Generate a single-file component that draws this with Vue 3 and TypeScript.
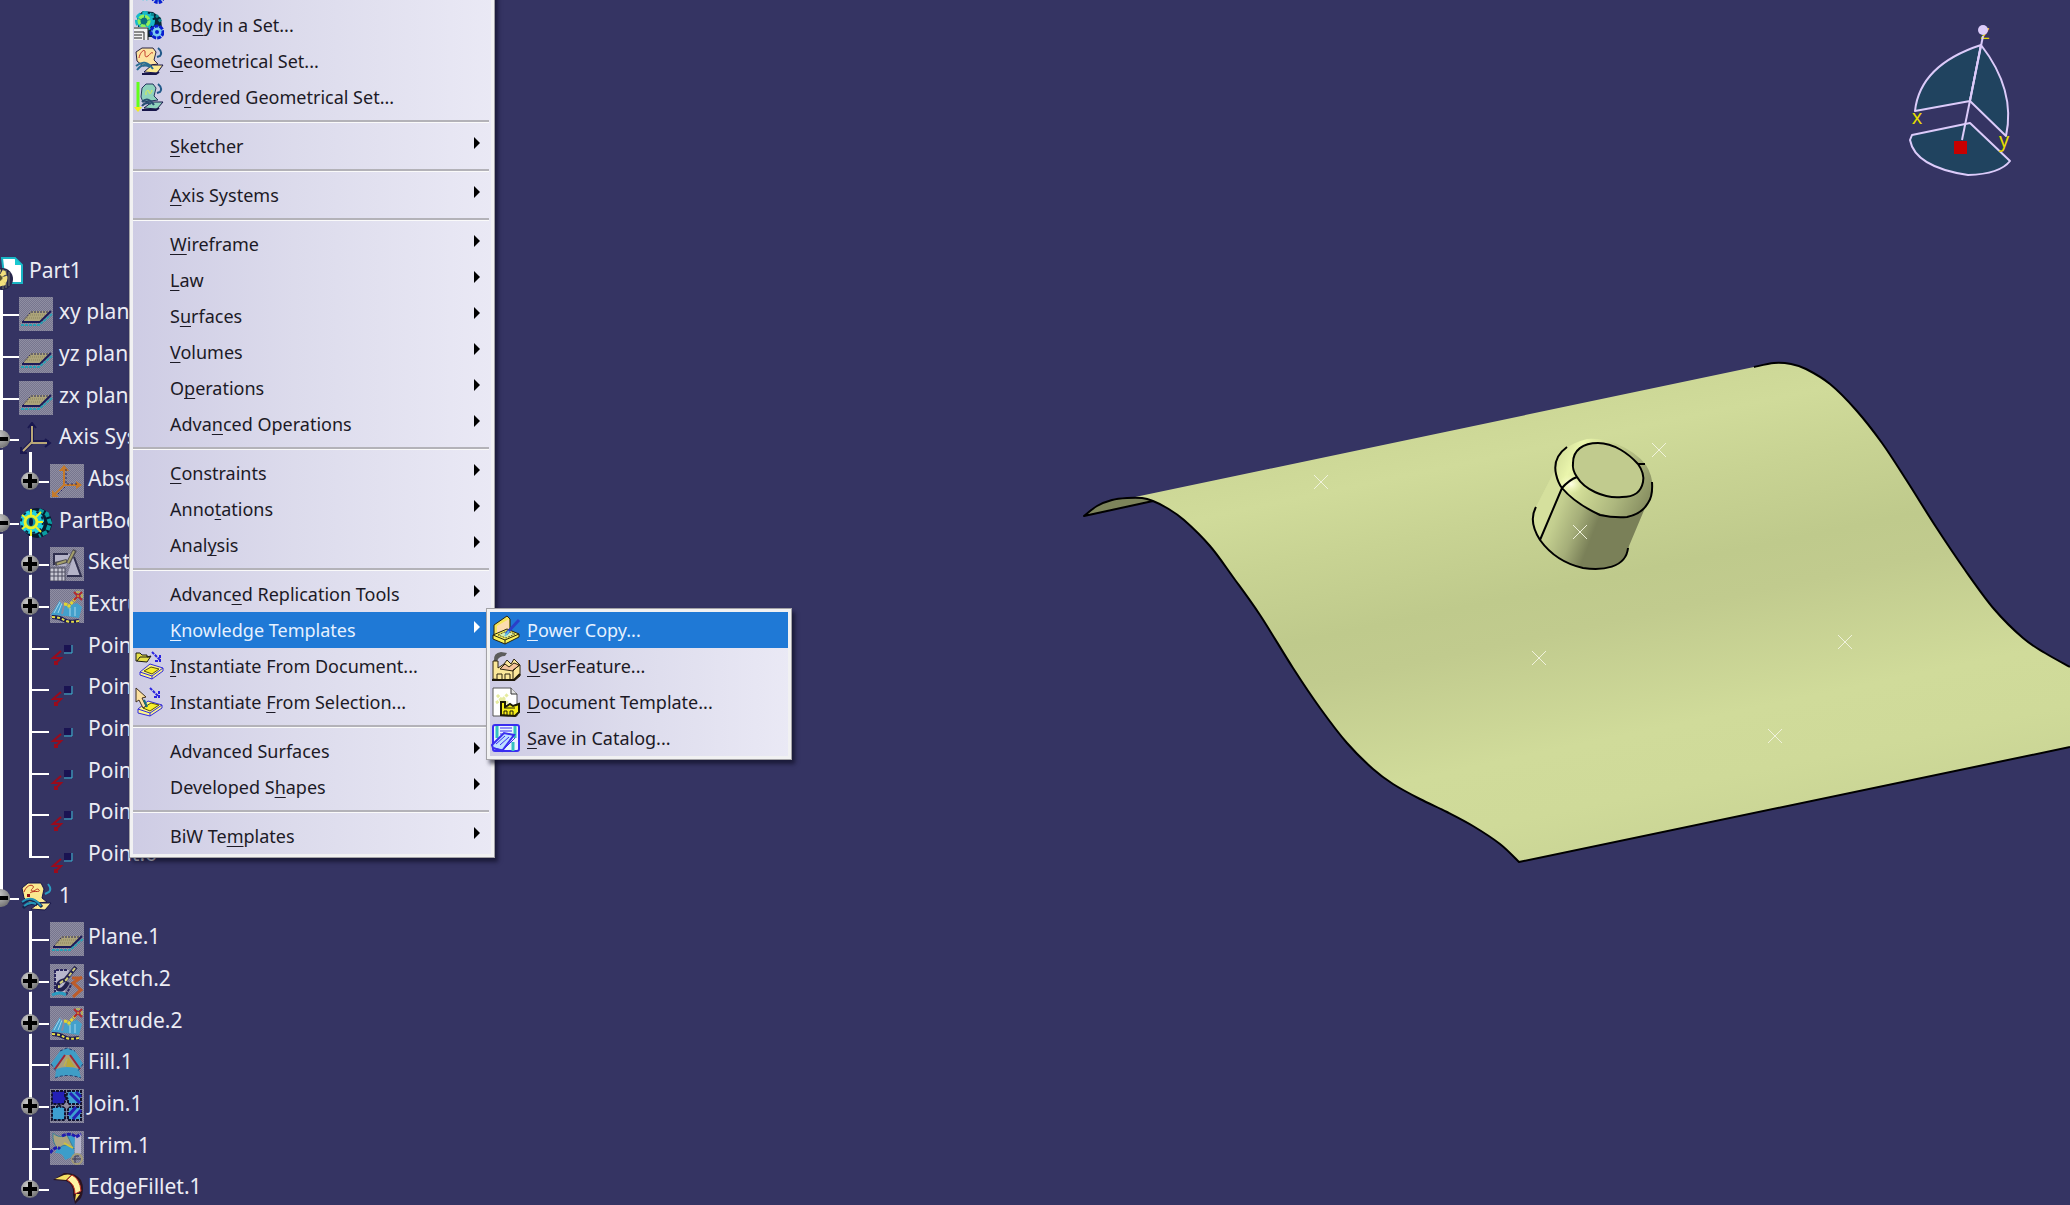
<script setup lang="ts">
interface TreeNode {
  label: string
  icon: string
  level: 0 | 1 | 2
  knob?: 'plus' | 'minus'
  first?: boolean
  last?: boolean
  trunk?: 'full' | 'start' | 'end'
}

interface MenuItem {
  label: string
  icon?: string
  sub?: boolean
  children?: MenuItem[]
}

type Point = [number, number]

const tree: TreeNode[] = [
  { label: 'Part1', icon: 'part', level: 0, trunk: 'start' },
  { label: 'xy plane', icon: 'plane', level: 1, trunk: 'full' },
  { label: 'yz plane', icon: 'plane', level: 1, trunk: 'full' },
  { label: 'zx plane', icon: 'plane', level: 1, trunk: 'full' },
  { label: 'Axis Systems', icon: 'axes', level: 1, knob: 'minus', trunk: 'full' },
  { label: 'Absolute', icon: 'axis', level: 2, knob: 'plus', first: true, last: true, trunk: 'full' },
  { label: 'PartBody', icon: 'gear', level: 1, knob: 'minus', trunk: 'full' },
  { label: 'Sketch.1', icon: 'sketch', level: 2, knob: 'plus', first: true, trunk: 'full' },
  { label: 'Extrude.1', icon: 'extrude', level: 2, knob: 'plus', trunk: 'full' },
  { label: 'Point.1', icon: 'point', level: 2, trunk: 'full' },
  { label: 'Point.2', icon: 'point', level: 2, trunk: 'full' },
  { label: 'Point.3', icon: 'point', level: 2, trunk: 'full' },
  { label: 'Point.4', icon: 'point', level: 2, trunk: 'full' },
  { label: 'Point.5', icon: 'point', level: 2, trunk: 'full' },
  { label: 'Point.6', icon: 'point', level: 2, last: true, trunk: 'full' },
  { label: '1', icon: 'geoset', level: 1, knob: 'minus', trunk: 'end' },
  { label: 'Plane.1', icon: 'plane', level: 2, first: true },
  { label: 'Sketch.2', icon: 'sketch2', level: 2, knob: 'plus' },
  { label: 'Extrude.2', icon: 'extrude', level: 2, knob: 'plus' },
  { label: 'Fill.1', icon: 'fill', level: 2 },
  { label: 'Join.1', icon: 'join', level: 2, knob: 'plus' },
  { label: 'Trim.1', icon: 'trim', level: 2 },
  { label: 'EdgeFillet.1', icon: 'fillet', level: 2, knob: 'plus', last: true },
]

// An ampersand marks the accelerator letter of each entry.
const groups: MenuItem[][] = [
  [
    { label: '&Body...', icon: 'body' },
    { label: 'Bo&dy in a Set...', icon: 'bodyset' },
    { label: '&Geometrical Set...', icon: 'mgeoset' },
    { label: 'O&rdered Geometrical Set...', icon: 'ordered' },
  ],
  [{ label: '&Sketcher', sub: true }],
  [{ label: '&Axis Systems', sub: true }],
  [
    { label: '&Wireframe', sub: true },
    { label: '&Law', sub: true },
    { label: 'S&urfaces', sub: true },
    { label: '&Volumes', sub: true },
    { label: 'O&perations', sub: true },
    { label: 'Adva&nced Operations', sub: true },
  ],
  [
    { label: '&Constraints', sub: true },
    { label: 'Anno&tations', sub: true },
    { label: 'Anal&ysis', sub: true },
  ],
  [
    { label: 'Advanc&ed Replication Tools', sub: true },
    {
      label: '&Knowledge Templates',
      sub: true,
      children: [
        { label: '&Power Copy...', icon: 'power' },
        { label: '&UserFeature...', icon: 'factory' },
        { label: '&Document Template...', icon: 'doctemplate' },
        { label: '&Save in Catalog...', icon: 'catalog' },
      ],
    },
    { label: '&Instantiate From Document...', icon: 'fromdoc' },
    { label: 'Instantiate &From Selection...', icon: 'fromsel' },
  ],
  [
    { label: 'Advanced Surfaces', sub: true },
    { label: 'Developed S&hapes', sub: true },
  ],
  [{ label: 'BiW Te&mplates', sub: true }],
]

function parts(label: string): [string, string, string] {
  const i = label.indexOf('&')
  return i < 0 ? [label, '', ''] : [label.slice(0, i), label[i + 1], label.slice(i + 2)]
}

// Catmull-Rom spline through the given points, as cubic path segments.
function spline(pts: Point[]): string {
  let d = ''
  for (let i = 0; i < pts.length - 1; i++) {
    const a = pts[Math.max(i - 1, 0)]
    const b = pts[i]
    const c = pts[i + 1]
    const e = pts[Math.min(i + 2, pts.length - 1)]
    d += `C${b[0] + (c[0] - a[0]) / 6} ${b[1] + (c[1] - a[1]) / 6} ${c[0] - (e[0] - b[0]) / 6} ${c[1] - (e[1] - b[1]) / 6} ${c[0]} ${c[1]}`
  }
  return d
}

const farCurve: Point[] = [
  [1754, 367], [1774, 363], [1791, 364], [1806, 369], [1830, 384], [1856, 410], [1882, 443], [1907, 481],
  [1936, 527], [1965, 570], [1994, 609], [2023, 638], [2045, 653], [2070, 667],
]
const nearCurve: Point[] = [
  [1084, 516], [1097, 506], [1112, 500], [1127, 498], [1142, 498], [1153, 501], [1167, 508], [1184, 520], [1210, 546],
  [1233, 577], [1260, 615], [1293, 668], [1320, 708], [1347, 743], [1373, 769], [1393, 784], [1420, 799],
  [1447, 812], [1473, 826], [1500, 844], [1519, 862],
]
const sheetFill = `M1135 497L1754 367${spline(farCurve)}V747L1519 862${spline(nearCurve.slice(5).reverse())}Z`
const sheetEdge = `M1153 501L1084 516${spline(nearCurve)}L2070 747M1754 367${spline(farCurve)}`
const underside = `M1084 516${spline(nearCurve.slice(0, 6))}Z`

const points: Point[] = [
  [1321, 482], [1659, 450], [1580, 532], [1539, 658], [1845, 642], [1775, 736],
]
</script>

<template>
  <div class="app">
    <svg width="0" height="0" class="sheet" aria-hidden="true">
      <defs>
        <pattern id="dither" width="2" height="2" patternUnits="userSpaceOnUse">
          <rect width="2" height="2" fill="#77768f" />
          <path d="M0 0h1v1h-1zM1 1h1v1h-1z" fill="#8f8ea2" />
        </pattern>
        <symbol id="i-part" viewBox="0 0 34 34">
          <path d="M11 2h13l7 7v18H14z" fill="#fff" stroke="#19b4c4" stroke-width="2" />
          <path d="M24 2v7h7z" fill="#19c8d0" />
          <circle cx="11" cy="23" r="11" fill="#26264a" />
          <path d="M12 13v20M15 14v18M18 16v14" stroke="#77766a" stroke-width="1" />
          <circle cx="8" cy="22" r="6" fill="none" stroke="#f3e07c" stroke-width="5" stroke-dasharray="4 1" />
          <path d="M2 29l12-14M2 15l12 14" stroke="#f3e07c" stroke-width="3" />
          <circle cx="8" cy="22" r="3" fill="#57522f" />
        </symbol>
        <symbol id="i-plane" viewBox="0 0 34 34">
          <rect width="34" height="34" fill="url(#dither)" />
          <path d="M2 26L12 14H32L21 26Z" fill="#aca47a" />
          <path d="M12 15H31M4 24L12 15" stroke="#25235a" stroke-width="1" stroke-dasharray="2 1" fill="none" />
          <path d="M9 18h18M6 21h18" stroke="#8a835f" stroke-width="1" stroke-dasharray="1 1" fill="none" />
          <path d="M3 25H21L32 14" stroke="#1d1a58" stroke-width="2" fill="none" />
          <path d="M2 28H20L33 17" stroke="#2aa0b4" stroke-width="2" fill="none" stroke-dasharray="3 1" />
        </symbol>
        <symbol id="i-axes" viewBox="0 0 34 34">
          <path d="M13 2v18h17M13 20L3 30" stroke="#1a1850" stroke-width="4" fill="none" />
          <path d="M13 4v17h15M13 20L4 29" stroke="#b9a777" stroke-width="2" fill="none" />
          <path d="M9 6l4-5 4 5M26 17l5 4-5 4M2 25v6h6" stroke="#1a1850" stroke-width="2" fill="none" />
        </symbol>
        <symbol id="i-axis" viewBox="0 0 34 34">
          <rect width="34" height="34" fill="url(#dither)" />
          <path d="M14 3v18h17M14 21L3 32" stroke="#c57a2a" stroke-width="2" fill="none" />
          <path d="M14 1l5 6H9zM32 21l-6-4v8zM2 33v-7l7 7z" fill="#c57a2a" />
          <path d="M16 5v15h12M15 23l-8 8" stroke="#29265e" stroke-width="1" stroke-dasharray="2 2" fill="none" />
        </symbol>
        <symbol id="i-gear" viewBox="0 0 34 34">
          <circle cx="18" cy="17" r="15" fill="#071b30" />
          <path d="M20 4l8 4 3 9-3 9-8 4" fill="none" stroke="#0a9ca1" stroke-width="4" stroke-dasharray="5 2" />
          <circle cx="13" cy="16" r="12" fill="#22cfe0" />
          <circle cx="13" cy="16" r="11" fill="none" stroke="#0b2a48" stroke-width="2" stroke-dasharray="3 4" />
          <circle cx="12" cy="16" r="6" fill="#1596a8" stroke="#e9f22a" stroke-width="3" />
          <path d="M3 9l5 4M12 3v6M22 6l-5 5M3 23l5-4M12 30v-6M22 26l-5-5M18 16h6" stroke="#e9f22a" stroke-width="2" />
          <ellipse cx="12" cy="16" rx="2" ry="4" fill="#0b1a3f" />
        </symbol>
        <symbol id="i-sketch" viewBox="0 0 34 34">
          <rect width="34" height="34" fill="url(#dither)" />
          <path d="M4 7h17l-5 12H4zM23 10l7 19H17z" fill="#b4b3c8" />
          <path d="M4 18V7h14M17 29h14L24 10" stroke="#30304f" stroke-width="2" fill="none" />
          <path d="M25 3l-7 13M5 17l12-3" stroke="#4c4a50" stroke-width="4" />
          <path d="M24 4l-6 12M7 17l9-3" stroke="#a49f6a" stroke-width="2" />
          <path d="M0 21h15v13H0zM4 21v13M8 21v13M12 21v13M0 25h15M0 29h15" stroke="#4a4a5f" stroke-width="1" fill="#c8c8d4" />
        </symbol>
        <symbol id="i-sketch2" viewBox="0 0 34 34">
          <rect width="34" height="34" fill="url(#dither)" />
          <path d="M5 6h14l-4 22H5z" fill="#b7b6cc" />
          <path d="M5 29V6h13M16 31l6-12" stroke="#29265e" stroke-width="2" fill="none" stroke-dasharray="3 1" />
          <path d="M26 3L15 16Q6 18 8 25Q13 28 18 18" stroke="#23214f" stroke-width="4" fill="none" />
          <path d="M25 4L16 16Q8 18 9 24" stroke="#d3cf78" stroke-width="2" fill="none" stroke-dasharray="4 2" />
          <path d="M2 31q8-4 14 0" stroke="#2a9cc0" stroke-width="3" fill="none" />
          <path d="M32 13l-9 6 8 7-8 7M22 14h10" stroke="#bd5c2a" stroke-width="3" fill="none" />
        </symbol>
        <symbol id="i-extrude" viewBox="0 0 34 34">
          <rect width="34" height="34" fill="url(#dither)" />
          <path d="M1 26L10 11L17 17L27 14L32 18L29 29L16 27Z" fill="#43a0cc" />
          <path d="M4 24L10 13M8 24l4-10M20 19v8M25 18v9" stroke="#a6d6ec" stroke-width="1" fill="none" />
          <path d="M10 11l4 5-2 9" stroke="#8b8aa0" stroke-width="2" fill="none" />
          <path d="M2 28q7 0 12 3t15 1" stroke="#1b1a50" stroke-width="4" fill="none" />
          <path d="M2 28q7 0 12 3t15 1" stroke="#e6df48" stroke-width="2" stroke-dasharray="3 2" fill="none" />
          <path d="M14 15q6 0 5 5M18 18l8-9" stroke="#e0d531" stroke-width="3" fill="none" stroke-dasharray="3 1" />
          <path d="M24 3l8 8M32 3l-8 8" fill="none" stroke="#b3282c" stroke-width="2" />
          <path d="M26 3h4M27 7h2M32 5v4" stroke="#e0d531" stroke-width="1" />
        </symbol>
        <symbol id="i-point" viewBox="0 0 34 34">
          <path d="M14 14h7v7h-7z" fill="#1a1352" />
          <path d="M22 14v8h-8" stroke="#3ab5d3" stroke-width="1" fill="none" />
          <path d="M11 20L3 27H11L5 33M5 30v3h3" stroke="#9a0b1c" stroke-width="2" fill="none" />
        </symbol>
        <symbol id="i-fill" viewBox="0 0 34 34">
          <rect width="34" height="34" fill="url(#dither)" />
          <path d="M1 17L10 4L17 1L25 4L33 17L29 23L31 31Q17 26 5 31L6 23Z" fill="#3f9dc6" />
          <path d="M10 4L17 1L25 4M1 17l5 7M33 17l-5 7M5 31Q17 26 31 31" stroke="#233a6c" stroke-width="1" fill="none" stroke-dasharray="3 2" />
          <path d="M6 22L15 8h5l9 14Q17 18 6 22Z" fill="#a89f7d" />
          <path d="M5 22L15 8M20 8l10 14" stroke="#9c2638" stroke-width="2" />
          <path d="M18 10l7 10h-9z" fill="#b8a83a" />
          <path d="M14 19l3-7" stroke="#c9bc3a" stroke-width="1" />
        </symbol>
        <symbol id="i-join" viewBox="0 0 34 34">
          <rect width="34" height="34" fill="url(#dither)" />
          <path d="M2 2h13v5l2 2-2 3v3H2z" fill="#2420b5" stroke="#12122e" stroke-width="2" stroke-dasharray="3 1" />
          <path d="M18 2h13v13H18v-5l-2-2zM2 18h5l2-2 2 2h4v13H2zM18 18h13v13H18z" fill="#3d9fd0" stroke="#12122e" stroke-width="2" stroke-dasharray="3 1" />
          <path d="M20 4l10 10M26 3l5 5M19 26l7-8M23 30l8-9" stroke="#2420b5" stroke-width="3" />
          <path d="M16 13l4 4-3 3-4-3z" fill="#8d8c9d" />
        </symbol>
        <symbol id="i-trim" viewBox="0 0 34 34">
          <rect width="34" height="34" fill="url(#dither)" />
          <path d="M24 6l7-4v20l-6 3z" fill="#b5b4ca" />
          <path d="M12 7q8-6 13 0l-1 18-9 4q-2-8-10-7z" fill="#3c9dca" />
          <path d="M3 2q6 6 14 2l7 14q-8-8-16 0Q2 12 3 2Z" fill="#aba47f" stroke="#3b7f96" stroke-width="1" />
          <path d="M0 22q6-8 10-4M12 5q8-4 14 1l5-3" stroke="#211cae" stroke-width="3" fill="none" stroke-dasharray="4 1" />
          <path d="M14 12l9 5" stroke="#cfc23c" stroke-width="2" />
          <circle cx="27" cy="28" r="5" fill="none" stroke="#a39b76" stroke-width="2" />
          <path d="M22 28h9M25 32v-7h4" stroke="#3a3850" stroke-width="1" fill="none" />
        </symbol>
        <symbol id="i-fillet" viewBox="0 0 34 34">
          <path d="M3 8L14 1Q25 0 31 8Q35 17 31 26L25 32L23 23Q24 12 16 9Z" fill="#2a1420" />
          <path d="M5 7L14 3Q18 2 21 3L16 8Z" fill="#f5df63" />
          <path d="M17 8L22 3Q30 7 31 19L25 22Q25 12 17 8Z" fill="#fdf3a4" stroke="#c02a20" stroke-width="1" />
          <path d="M26 22h4l-5 7z" fill="#f5df63" />
        </symbol>
        <symbol id="i-geoset" viewBox="0 0 34 34">
          <path d="M3 7L9 2H22L25 8L23 17L28 21L11 23L5 17Z" fill="#fbe98f" stroke="#18164a" stroke-width="1" />
          <path d="M5 11C7 5 12 3 14 5S10 9 13 10S18 6 20 9S14 9 11 12" fill="none" stroke="#b8331f" stroke-width="1" />
          <path d="M8 13h3v3h-3z" fill="#8f0f12" />
          <path d="M29 3q4 5 1 8l-4 2" fill="none" stroke="#2b9bc1" stroke-width="2" />
          <path d="M12 28L20 22H32L26 29Z" fill="#fbe98f" stroke="#18164a" stroke-width="1" />
          <path d="M3 22q10-8 20 4M4 27q7-7 14-3" fill="none" stroke="#15234e" stroke-width="3" />
          <path d="M3 21q10-8 19 4M5 25q6-5 12-2" fill="none" stroke="#2495b8" stroke-width="2" />
        </symbol>

        <symbol id="i-body" viewBox="0 0 30 30">
          <circle cx="14" cy="14" r="12" fill="#071b30" />
          <circle cx="11" cy="17" r="7" fill="#0c97a8" stroke="#22cfe0" stroke-width="5" stroke-dasharray="4 2" />
          <circle cx="11" cy="17" r="5" fill="none" stroke="#a8f04a" stroke-width="2" stroke-dasharray="4 2" />
          <circle cx="24" cy="23" r="5" fill="#6ec9ee" stroke="#0a1fd0" stroke-width="4" stroke-dasharray="3 1" />
        </symbol>
        <symbol id="i-bodyset" viewBox="0 0 30 30">
          <path d="M3 6l6-5 10 1 8 6 1 10-7 9H5z" fill="#06283a" />
          <circle cx="11" cy="11" r="8" fill="#18b9c9" stroke="#18b9c9" stroke-width="4" stroke-dasharray="5 2" />
          <circle cx="10" cy="11" r="5" fill="#0b6f80" stroke="#8ff05a" stroke-width="3" stroke-dasharray="5 1" />
          <path d="M17 4l6 2 4 6" stroke="#0b8791" stroke-width="3" fill="none" stroke-dasharray="3 2" />
          <circle cx="23" cy="22" r="6" fill="#7ccdf0" stroke="#0a1fd0" stroke-width="3" stroke-dasharray="4 1" />
          <circle cx="23" cy="22" r="2" fill="#0a1fd0" />
          <path d="M0 17h14v13H0z" fill="#f2f2f2" />
          <path d="M0 18h14v12M0 22h10v8M0 25h8M0 28h8" stroke="#222" stroke-width="1" fill="none" />
        </symbol>
        <symbol id="i-mgeoset" viewBox="0 0 30 30">
          <path d="M2 6L8 2H19L22 6L20 14L24 18L9 20L3 15Z" fill="#fde2a0" stroke="#2a2340" stroke-width="1" />
          <path d="M5 12C6 6 11 2 11 6S11 12 14 10S16 6 19 7" fill="none" stroke="#c0352a" stroke-width="1" />
          <path d="M24 2q5 4 2 8l-3 1" fill="none" stroke="#235a8a" stroke-width="2" />
          <path d="M10 26L18 19H29L23 27Z" fill="#fbe98f" stroke="#18164a" stroke-width="1" />
          <path d="M8 28h14l3-2" stroke="#18164a" stroke-width="2" fill="none" />
          <path d="M2 20q9-8 17 3M3 24q6-8 13-3" fill="none" stroke="#2a6d92" stroke-width="2" />
        </symbol>
        <symbol id="i-ordered" viewBox="0 0 30 30">
          <path d="M8 6L12 2H19L22 6L20 14L24 18L9 20L7 15Z" fill="#8fd2bd" stroke="#23345e" stroke-width="1" />
          <path d="M12 13C11 8 15 7 15 10S18 11 18 8" fill="none" stroke="#dff04a" stroke-width="1" />
          <path d="M24 2q5 4 2 8l-3 1" fill="none" stroke="#235a8a" stroke-width="2" />
          <path d="M10 26L18 20H29L23 27Z" fill="#8fd2bd" stroke="#18164a" stroke-width="1" />
          <path d="M8 28h14l3-2" stroke="#18164a" stroke-width="2" fill="none" />
          <path d="M8 20q6-6 12 3M8 24q4-5 9-2" fill="none" stroke="#2a4d72" stroke-width="2" />
          <path d="M4 0v26" stroke="#63ff1a" stroke-width="3" />
          <path d="M0 25h8l-4 5z" fill="#f4f01a" />
        </symbol>
        <symbol id="i-fromdoc" viewBox="0 0 30 30">
          <path d="M2 10V2h4l2 2h5v2l4-1-4 6z" fill="#e6e04a" stroke="#1c1c10" stroke-width="1" />
          <path d="M3 10l3-4h10" stroke="#1c1c10" stroke-width="1" fill="none" />
          <path d="M18 1l8 8M26 4v6h-6" fill="none" stroke="#2a22e0" stroke-width="2" stroke-dasharray="3 1" />
          <path d="M6 21L16 13L29 17V20L18 28L6 24Z" fill="#fbf58a" stroke="#3028e0" stroke-width="1" />
          <path d="M6 21l12 4 11-8M18 25v3" fill="none" stroke="#3028e0" stroke-width="1" />
          <path d="M10 20l7-4 8 2-7 5z" fill="#f8ee2a" stroke="#55510f" stroke-width="1" />
        </symbol>
        <symbol id="i-fromsel" viewBox="0 0 30 30">
          <path d="M16 1l8 8M25 4v6h-6" fill="none" stroke="#2a22e0" stroke-width="2" stroke-dasharray="3 1" />
          <path d="M4 22L14 14L28 18V21L16 29L4 26Z" fill="#fbf58a" stroke="#3028e0" stroke-width="1" />
          <path d="M4 22l12 4 12-8M16 26v3" fill="none" stroke="#3028e0" stroke-width="1" />
          <path d="M9 21l8-5 8 2-9 6z" fill="#f8f02a" stroke="#55510f" stroke-width="1" />
          <path d="M2 1v14l3-2 4 8 3-2-4-8 4-1z" fill="#fbe0a0" stroke="#403020" stroke-width="1" />
          <path d="M13 20l-3-7" stroke="#17707c" stroke-width="2" />
        </symbol>
        <symbol id="i-power" viewBox="0 0 30 30">
          <path d="M3 20V10L16 1L19 4V14L6 22Z" fill="#f4e55a" stroke="#28240c" stroke-width="1" />
          <path d="M6 11L18 4V15L6 19Z" fill="#fbdcae" />
          <path d="M2 20L16 14L28 19V22L14 29L2 24Z" fill="#f8f05a" stroke="#28240c" stroke-width="1" />
          <path d="M2 20l12 5 14-6M14 25v4" fill="none" stroke="#28240c" stroke-width="1" />
          <path d="M7 20l9-4 8 3-9 4z" fill="#d6ecb0" stroke="#5c5a20" stroke-width="1" stroke-dasharray="2 1" />
          <path d="M28 5L15 19" stroke="#2b3fc8" stroke-width="3" />
          <path d="M18 16l-4 5" stroke="#5cc0e8" stroke-width="2" />
        </symbol>
        <symbol id="i-factory" viewBox="0 0 30 30">
          <path d="M3 10Q2 2 10 1l6 1-2 3Q8 5 6 10Z" fill="#5c5c5c" />
          <path d="M2 28V10h5v7l6-4 3-4 4 4 3-5 6 6v11l-6 5z" fill="#fbe79a" stroke="#2e2410" stroke-width="1" />
          <path d="M9 18l5-5 4 3 5-4 5 2-6 6z" fill="#f5c49c" stroke="#2e2410" stroke-width="1" />
          <path d="M22 28V19l7-5M6 28v-5h5v5M14 28v-5h5v5" fill="none" stroke="#2e2410" stroke-width="1" />
          <path d="M1 29h22l6-6" fill="none" stroke="#1c160a" stroke-width="2" />
        </symbol>
        <symbol id="i-doctemplate" viewBox="0 0 30 30">
          <path d="M2 1h18l6 6v22H2z" fill="#fff" stroke="#555" stroke-width="1" />
          <path d="M20 1v6h6" fill="#e4e4e4" stroke="#333" stroke-width="1" />
          <path d="M6 8l5 5 6-6M5 16l6-4 6 4" fill="none" stroke="#e6eba0" stroke-width="3" stroke-dasharray="3 1" />
          <path d="M10 28V15h4v5l5-3 3 2 6-2v8l-4 4z" fill="#f6ee1a" stroke="#1e1c06" stroke-width="2" />
          <path d="M13 28v-4h3v4M19 28v-4h3v4M14 21h10" fill="none" stroke="#1e1c06" stroke-width="1" />
        </symbol>
        <symbol id="i-catalog" viewBox="0 0 30 30">
          <rect x="2" y="2" width="26" height="26" rx="2" fill="#eaf4ff" stroke="#3a2ef0" stroke-width="2" />
          <path d="M6 3v12M24 3v12" stroke="#35c2c0" stroke-width="3" />
          <path d="M9 5h12M9 8h12M9 11h9" stroke="#3a2ef0" stroke-width="1" />
          <path d="M1 22L13 10l10 2-9 12-3 4-9-3z" fill="#bfe0ff" stroke="#3a2ef0" stroke-width="2" />
          <path d="M5 21l9-8M9 22l9-8M3 25l9 2 12-12" fill="none" stroke="#3a2ef0" stroke-width="1" />
          <path d="M22 19v9" stroke="#35c2c0" stroke-width="3" />
        </symbol>
      </defs>
    </svg>

    <svg class="scene" viewBox="0 0 2070 1205" preserveAspectRatio="xMaxYMin slice" role="img" aria-label="3D part view">
      <defs>
        <linearGradient id="sheetShade" gradientUnits="userSpaceOnUse" x1="1400" y1="441" x2="1490" y2="871">
          <stop offset="0" stop-color="#cdd897" />
          <stop offset="0.08" stop-color="#d0db9a" />
          <stop offset="0.22" stop-color="#c8d393" />
          <stop offset="0.4" stop-color="#bfca8c" />
          <stop offset="0.5" stop-color="#c1cb8e" />
          <stop offset="0.76" stop-color="#d0db9a" />
          <stop offset="0.9" stop-color="#cfda99" />
          <stop offset="1" stop-color="#cbd696" />
        </linearGradient>
        <linearGradient id="bossShade" gradientUnits="userSpaceOnUse" x1="1540" y1="505" x2="1630" y2="540">
          <stop offset="0" stop-color="#d2dd9b" />
          <stop offset="0.2" stop-color="#c3ce8f" />
          <stop offset="0.42" stop-color="#a5ae79" />
          <stop offset="0.62" stop-color="#7a8058" />
          <stop offset="1" stop-color="#7a8058" />
        </linearGradient>
        <linearGradient id="ringShade" gradientUnits="userSpaceOnUse" x1="1556" y1="460" x2="1648" y2="505">
          <stop offset="0" stop-color="#d6e19c" />
          <stop offset="0.16" stop-color="#eaf5ac" />
          <stop offset="0.4" stop-color="#cbd692" />
          <stop offset="0.7" stop-color="#adb77e" />
          <stop offset="1" stop-color="#868d60" />
        </linearGradient>
        <radialGradient id="glint">
          <stop offset="0" stop-color="#ffffe8" />
          <stop offset="1" stop-color="#f3fbb8" stop-opacity="0" />
        </radialGradient>
      </defs>

      <path :d="sheetFill" fill="url(#sheetShade)" />
      <path :d="underside" fill="#7d845b" />
      <path :d="sheetEdge" class="edge" />

      <path d="M1555 470L1536 507Q1528 521 1540 540Q1556 562 1583 568C1602 571 1626 568 1629 546L1645 508L1600 490Z" fill="url(#bossShade)" />
      <path d="M1555 470L1536 507Q1528 521 1540 540L1562 488Z" fill="#d5e09d" />
      <path d="M1587 439Q1602 438 1617 444Q1636 452 1646 465Q1654 478 1652 492Q1649 511 1627 517Q1612 519 1590 510Q1571 501 1562 488Q1554 478 1555 465Q1559 446 1587 439Z" fill="url(#ringShade)" />
      <ellipse cx="1571" cy="484" rx="12" ry="10" fill="url(#glint)" />
      <path d="M1573 463C1573 450 1583 443 1598 443C1614 443 1629 454 1638 464C1643 471 1644 477 1643 482C1641 492 1635 497 1622 497C1604 499 1584 489 1577 477Q1572 470 1573 463Z" fill="#c1cb8e" class="edge" />
      <path d="M1567 447C1556 455 1554 465 1556 474Q1558 483 1562 488C1572 500 1585 508 1600 515Q1614 518 1627 517C1637 515 1644 510 1648 503Q1653 496 1652 482M1577 477Q1569 480 1562 488L1540 540M1638 464h7M1536 507Q1528 521 1540 540Q1556 562 1583 568C1602 571 1626 568 1628 548" class="edge" />

      <path v-for="[x, y] in points" :key="x" :d="`M${x - 7} ${y - 7}l14 14m0 -14l-14 14`" class="mark" />

      <text x="1985" y="39" class="axis-name">z</text>
      <g class="compass">
        <path d="M1981 45Q1920 65 1915 111L1970 101Z" />
        <path d="M1981 45Q2016 90 2006 136L1970 101Z" />
        <path d="M1912 135L1970 123L2010 161Q2000 174 1968 175Q1915 167 1910 140Z" />
        <path d="M1983 36L1962 140" />
      </g>
      <circle cx="1983" cy="30" r="5" fill="#dccbfa" />
      <rect x="1954" y="141" width="13" height="13" fill="#c80000" />
      <text x="1917" y="124" class="axis-name">x</text>
      <text x="2004" y="147" class="axis-name">y</text>
    </svg>

    <ul class="tree" aria-label="Specification tree">
      <li v-for="(node, i) in tree" :key="i" class="node" :class="['level-' + node.level, { first: node.first, last: node.last }]">
        <span v-if="node.trunk" class="trunk" :class="node.trunk"></span>
        <span v-if="node.level === 2" class="spine"></span>
        <span v-if="node.level" class="tail"></span>
        <button v-if="node.knob" class="knob" type="button" :class="node.knob" :aria-label="(node.knob === 'plus' ? 'Expand ' : 'Collapse ') + node.label"></button>
        <svg class="node-icon" aria-hidden="true"><use :href="'#i-' + node.icon" /></svg>
        <span class="node-label">{{ node.label }}</span>
      </li>
    </ul>

    <nav class="menu" aria-label="Insert">
      <ul v-for="(group, g) in groups" :key="g" class="group">
        <li v-for="item in group" :key="item.label" class="entry">
          <button type="button" class="item" :class="{ active: item.children }">
            <svg v-if="item.icon" class="item-icon" aria-hidden="true"><use :href="'#i-' + item.icon" /></svg>
            <span class="item-label">{{ parts(item.label)[0] }}<u>{{ parts(item.label)[1] }}</u>{{ parts(item.label)[2] }}</span>
            <span v-if="item.sub" class="arrow"></span>
          </button>
          <ul v-if="item.children" class="submenu">
            <li v-for="(child, c) in item.children" :key="child.label">
              <button type="button" class="item" :class="{ active: c === 0 }">
                <svg class="item-icon" aria-hidden="true"><use :href="'#i-' + child.icon" /></svg>
                <span class="item-label">{{ parts(child.label)[0] }}<u>{{ parts(child.label)[1] }}</u>{{ parts(child.label)[2] }}</span>
              </button>
            </li>
          </ul>
        </li>
      </ul>
    </nav>
  </div>
</template>

<style>
body {
  margin: 0;
  background: #353463;
}
</style>

<style scoped>
.app {
  position: relative;
  height: 100vh;
  overflow: hidden;
  background: #353463;
  font-family: 'Noto Sans', 'Open Sans', sans-serif;
}
ul {
  margin: 0;
  padding: 0;
  list-style: none;
}
.sheet {
  position: absolute;
}
.scene {
  position: absolute;
  inset: 0;
  width: 100%;
  height: 100%;
}
.edge {
  stroke: #000;
  stroke-width: 2;
  stroke-linejoin: round;
}
path.edge:not([fill]) {
  fill: none;
}
.mark {
  stroke: #f0f2dc;
  stroke-width: 1;
  fill: none;
}
.compass {
  fill: #20435f;
  stroke: #dccbfa;
  stroke-width: 2;
  stroke-linejoin: round;
}
.axis-name {
  fill: #e6dc00;
  font-size: 20px;
  text-anchor: middle;
}

/* specification tree */
.tree {
  position: relative;
  display: flex;
  flex-direction: column;
  box-sizing: border-box;
  height: calc(100vh + 5px);
  padding-top: 252px;
}
.node {
  position: relative;
  display: flex;
  flex: 1 1 0;
  align-items: center;
  gap: 6px;
  min-height: 0;
  color: #ececf4;
  font-size: 21px;
  line-height: 28px;
  white-space: nowrap;
}
.level-0 {
  gap: 4px;
  margin-left: -9px;
}
.level-1 {
  padding-left: 19px;
}
.level-2 {
  gap: 4px;
  padding-left: 50px;
}
.node-icon {
  position: relative;
  flex: none;
  width: 34px;
  height: 34px;
}
.node-label {
  padding-bottom: 6px;
}
.trunk,
.spine,
.tail,
.knob {
  position: absolute;
  background: #fff;
}
.trunk {
  left: 0;
  top: 0;
  bottom: 0;
  width: 3px;
}
.trunk.start {
  left: 9px;
  top: 34px;
}
.trunk.end {
  bottom: 50%;
}
.spine {
  left: 29px;
  top: 0;
  bottom: 0;
  width: 3px;
}
.first .spine {
  top: -8px;
}
.last .spine {
  bottom: calc(50% - 2px);
}
.tail {
  left: 0;
  top: 50%;
  width: 19px;
  height: 2px;
}
.level-2 .tail {
  left: 30px;
}
.knob {
  box-sizing: border-box;
  left: -8px;
  top: calc(50% - 9px);
  width: 18px;
  height: 18px;
  padding: 0;
  border: 0;
  border-radius: 50%;
  background: radial-gradient(circle at 35% 30%, #c9c9c9, #8d8d8d 55%, #5a5a5a);
  box-shadow: 0 2px 0 #353463;
}
.level-2 .knob {
  left: 21px;
}
.knob::before,
.knob.plus::after {
  content: '';
  position: absolute;
  left: 2px;
  top: 7px;
  width: 14px;
  height: 4px;
  background: #000;
}
.knob.plus::after {
  left: 7px;
  top: 2px;
  width: 4px;
  height: 14px;
}

/* menus */
.menu,
.submenu {
  position: absolute;
  box-sizing: border-box;
  border: 1px solid #a3a2a6;
  background: linear-gradient(90deg, #cecce4, #dcdbec 45%, #eae9f5);
  box-shadow: inset 0 0 0 3px #f1f1f2, 3px 4px 4px rgba(10, 10, 30, 0.6);
}
.menu {
  left: 129px;
  top: -33px;
  width: 366px;
  padding: 3px 5px 3px 3px;
}
.submenu {
  left: 353px;
  top: -4px;
  width: 306px;
  padding: 3px;
}
.group + .group::before {
  content: '';
  display: block;
  box-sizing: border-box;
  height: 3px;
  margin: 5px 0;
  border-top: 2px solid #b3b2b8;
  background: #fafafa;
}
.entry {
  position: relative;
}
.item {
  display: flex;
  align-items: center;
  position: relative;
  width: 100%;
  height: 36px;
  padding: 0 9px 0 37px;
  border: 0;
  background: none;
  color: #1c1a26;
  font: 400 18px/24px 'Noto Sans', 'Open Sans', sans-serif;
  text-align: left;
  white-space: nowrap;
}
.item.active {
  background: #1f79d6;
  color: #e6f1ff;
}
.item-icon {
  position: absolute;
  left: 1px;
  top: 3px;
  width: 30px;
  height: 30px;
}
.item-label {
  flex: 1;
}
.item-label u {
  text-underline-offset: 3px;
  text-decoration-thickness: 1px;
  text-decoration-skip-ink: none;
}
.arrow {
  width: 0;
  height: 0;
  margin-bottom: 6px;
  border: 6px solid transparent;
  border-left-color: #000;
  border-right-width: 0;
}
.active .arrow {
  border-left-color: #fff;
}
</style>
